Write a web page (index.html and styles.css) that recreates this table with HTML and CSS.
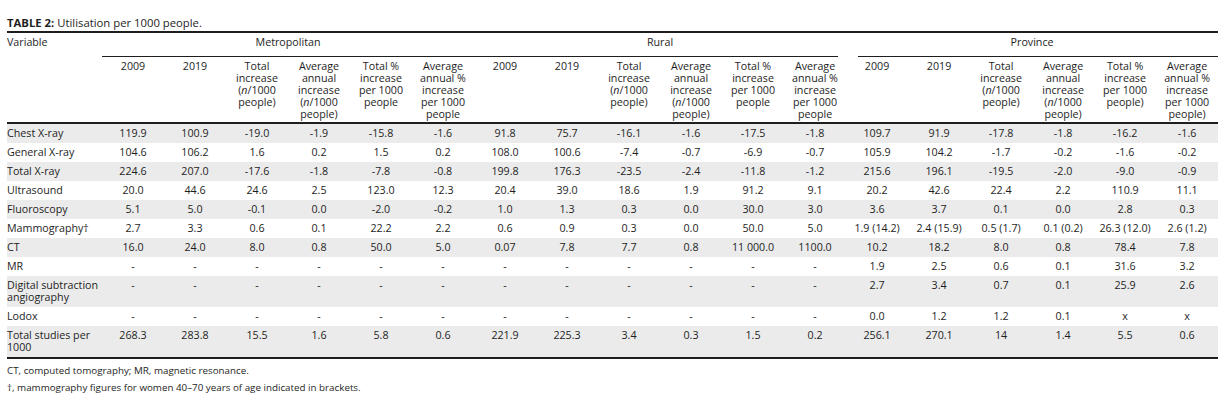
FILE: index.html
```html
<!DOCTYPE html>
<html lang="en">
<head>
<meta charset="utf-8">
<title>Table 2: Utilisation per 1000 people</title>
<link rel="stylesheet" href="styles.css">
</head>
<body>
<div class="page">
  <p class="caption"><b>TABLE 2:</b> Utilisation per 1000 people.</p>
  <table class="data">
    <colgroup>
      <col class="c-var">
      <col class="c-num"><col class="c-num"><col class="c-num"><col class="c-num"><col class="c-num"><col class="c-num">
      <col class="c-num"><col class="c-num"><col class="c-num"><col class="c-num"><col class="c-num"><col class="c-num">
      <col class="c-num"><col class="c-num"><col class="c-num"><col class="c-num"><col class="c-num"><col class="c-num">
    </colgroup>
    <thead>
      <tr class="h-group">
        <th class="var" rowspan="2">Variable</th>
        <th class="grp" colspan="6"><div class="gl">Metropolitan</div></th>
        <th class="grp" colspan="6"><div class="gl gl-r">Rural</div></th>
        <th class="grp" colspan="6"><div class="gl gl-p">Province</div></th>
      </tr>
      <tr class="h-cols">
        <th>2009</th>
        <th>2019</th>
        <th>Total<br>increase<br>(<i>n</i>/1000<br>people)</th>
        <th>Average<br>annual<br>increase<br>(<i>n</i>/1000<br>people)</th>
        <th>Total %<br>increase<br>per 1000<br>people</th>
        <th>Average<br>annual %<br>increase<br>per 1000<br>people</th>
        <th>2009</th>
        <th>2019</th>
        <th>Total<br>increase<br>(<i>n</i>/1000<br>people)</th>
        <th>Average<br>annual<br>increase<br>(<i>n</i>/1000<br>people)</th>
        <th>Total %<br>increase<br>per 1000<br>people</th>
        <th>Average<br>annual %<br>increase<br>per 1000<br>people</th>
        <th>2009</th>
        <th>2019</th>
        <th>Total<br>increase<br>(<i>n</i>/1000<br>people)</th>
        <th>Average<br>annual<br>increase<br>(<i>n</i>/1000<br>people)</th>
        <th>Total %<br>increase<br>per 1000<br>people)</th>
        <th>Average<br>annual %<br>increase<br>per 1000<br>people)</th>
      </tr>
    </thead>
    <tbody>
      <tr class="shade"><td class="var">Chest X-ray</td><td>119.9</td><td>100.9</td><td>-19.0</td><td>-1.9</td><td>-15.8</td><td>-1.6</td><td>91.8</td><td>75.7</td><td>-16.1</td><td>-1.6</td><td>-17.5</td><td>-1.8</td><td>109.7</td><td>91.9</td><td>-17.8</td><td>-1.8</td><td>-16.2</td><td>-1.6</td></tr>
      <tr><td class="var">General X-ray</td><td>104.6</td><td>106.2</td><td>1.6</td><td>0.2</td><td>1.5</td><td>0.2</td><td>108.0</td><td>100.6</td><td>-7.4</td><td>-0.7</td><td>-6.9</td><td>-0.7</td><td>105.9</td><td>104.2</td><td>-1.7</td><td>-0.2</td><td>-1.6</td><td>-0.2</td></tr>
      <tr class="shade"><td class="var">Total X-ray</td><td>224.6</td><td>207.0</td><td>-17.6</td><td>-1.8</td><td>-7.8</td><td>-0.8</td><td>199.8</td><td>176.3</td><td>-23.5</td><td>-2.4</td><td>-11.8</td><td>-1.2</td><td>215.6</td><td>196.1</td><td>-19.5</td><td>-2.0</td><td>-9.0</td><td>-0.9</td></tr>
      <tr><td class="var">Ultrasound</td><td>20.0</td><td>44.6</td><td>24.6</td><td>2.5</td><td>123.0</td><td>12.3</td><td>20.4</td><td>39.0</td><td>18.6</td><td>1.9</td><td>91.2</td><td>9.1</td><td>20.2</td><td>42.6</td><td>22.4</td><td>2.2</td><td>110.9</td><td>11.1</td></tr>
      <tr class="shade"><td class="var">Fluoroscopy</td><td>5.1</td><td>5.0</td><td>-0.1</td><td>0.0</td><td>-2.0</td><td>-0.2</td><td>1.0</td><td>1.3</td><td>0.3</td><td>0.0</td><td>30.0</td><td>3.0</td><td>3.6</td><td>3.7</td><td>0.1</td><td>0.0</td><td>2.8</td><td>0.3</td></tr>
      <tr><td class="var">Mammography†</td><td>2.7</td><td>3.3</td><td>0.6</td><td>0.1</td><td>22.2</td><td>2.2</td><td>0.6</td><td>0.9</td><td>0.3</td><td>0.0</td><td>50.0</td><td>5.0</td><td>1.9 (14.2)</td><td>2.4 (15.9)</td><td>0.5 (1.7)</td><td>0.1 (0.2)</td><td>26.3 (12.0)</td><td>2.6 (1.2)</td></tr>
      <tr class="shade"><td class="var">CT</td><td>16.0</td><td>24.0</td><td>8.0</td><td>0.8</td><td>50.0</td><td>5.0</td><td>0.07</td><td>7.8</td><td>7.7</td><td>0.8</td><td>11 000.0</td><td>1100.0</td><td>10.2</td><td>18.2</td><td>8.0</td><td>0.8</td><td>78.4</td><td>7.8</td></tr>
      <tr><td class="var">MR</td><td>-</td><td>-</td><td>-</td><td>-</td><td>-</td><td>-</td><td>-</td><td>-</td><td>-</td><td>-</td><td>-</td><td>-</td><td>1.9</td><td>2.5</td><td>0.6</td><td>0.1</td><td>31.6</td><td>3.2</td></tr>
      <tr class="shade"><td class="var">Digital subtraction<br>angiography</td><td>-</td><td>-</td><td>-</td><td>-</td><td>-</td><td>-</td><td>-</td><td>-</td><td>-</td><td>-</td><td>-</td><td>-</td><td>2.7</td><td>3.4</td><td>0.7</td><td>0.1</td><td>25.9</td><td>2.6</td></tr>
      <tr><td class="var">Lodox</td><td>-</td><td>-</td><td>-</td><td>-</td><td>-</td><td>-</td><td>-</td><td>-</td><td>-</td><td>-</td><td>-</td><td>-</td><td>0.0</td><td>1.2</td><td>1.2</td><td>0.1</td><td>x</td><td>x</td></tr>
      <tr class="shade last"><td class="var">Total studies per<br>1000</td><td>268.3</td><td>283.8</td><td>15.5</td><td>1.6</td><td>5.8</td><td>0.6</td><td>221.9</td><td>225.3</td><td>3.4</td><td>0.3</td><td>1.5</td><td>0.2</td><td>256.1</td><td>270.1</td><td>14</td><td>1.4</td><td>5.5</td><td>0.6</td></tr>
    </tbody>
  </table>
  <div class="notes">
    <p class="note">CT, computed tomography; MR, magnetic resonance.</p>
    <p class="note">†, mammography figures for women 40–70 years of age indicated in brackets.</p>
  </div>
</div>
</body>
</html>
```
FILE: styles.css
```css
html, body {
  margin: 0;
  padding: 0;
  background: #ffffff;
}

body {
  font-family: "Open Sans", "Liberation Sans", sans-serif;
  font-size: 10.7px;
  color: #1e1e1e;
}

.page {
  padding: 16px 0 0 7px;
}

.caption {
  margin: 0 0 1px 0;
  line-height: 14px;
  font-size: 11.3px;
}

.caption b {
  font-weight: 700;
}

.data {
  border-collapse: collapse;
  table-layout: fixed;
  width: 1211px;
  border-top: 2px solid #1e1e1e;
  border-bottom: 2px solid #1e1e1e;
}

.c-var { width: 95px; }
.c-num { width: 62px; }

.data th,
.data td {
  font-weight: 400;
  line-height: 12px;
  text-align: center;
  vertical-align: top;
  padding: 0;
}

.data th.var,
.data td.var {
  text-align: left;
}

.h-group th.var {
  padding-top: 3px;
}

.h-group th.grp {
  padding: 0;
}

.gl {
  padding: 3px 0 8px 0;
  border-bottom: 1px solid #1e1e1e;
}

.gl-r {
  margin-right: 8px;
  padding-left: 8px;
}

.gl-p {
  margin-left: 12px;
  padding-right: 12px;
}

.h-cols th {
  padding: 3px 0 2px 0;
}

.data thead {
  border-bottom: 2px solid #1e1e1e;
}

.data tbody td {
  padding: 3px 0 4px 0;
}

.data tbody tr.shade td {
  background: #ebebeb;
}

.notes {
  padding-top: 3px;
}

.note {
  margin: 0;
  font-size: 9.8px;
  line-height: 17px;
}
```
